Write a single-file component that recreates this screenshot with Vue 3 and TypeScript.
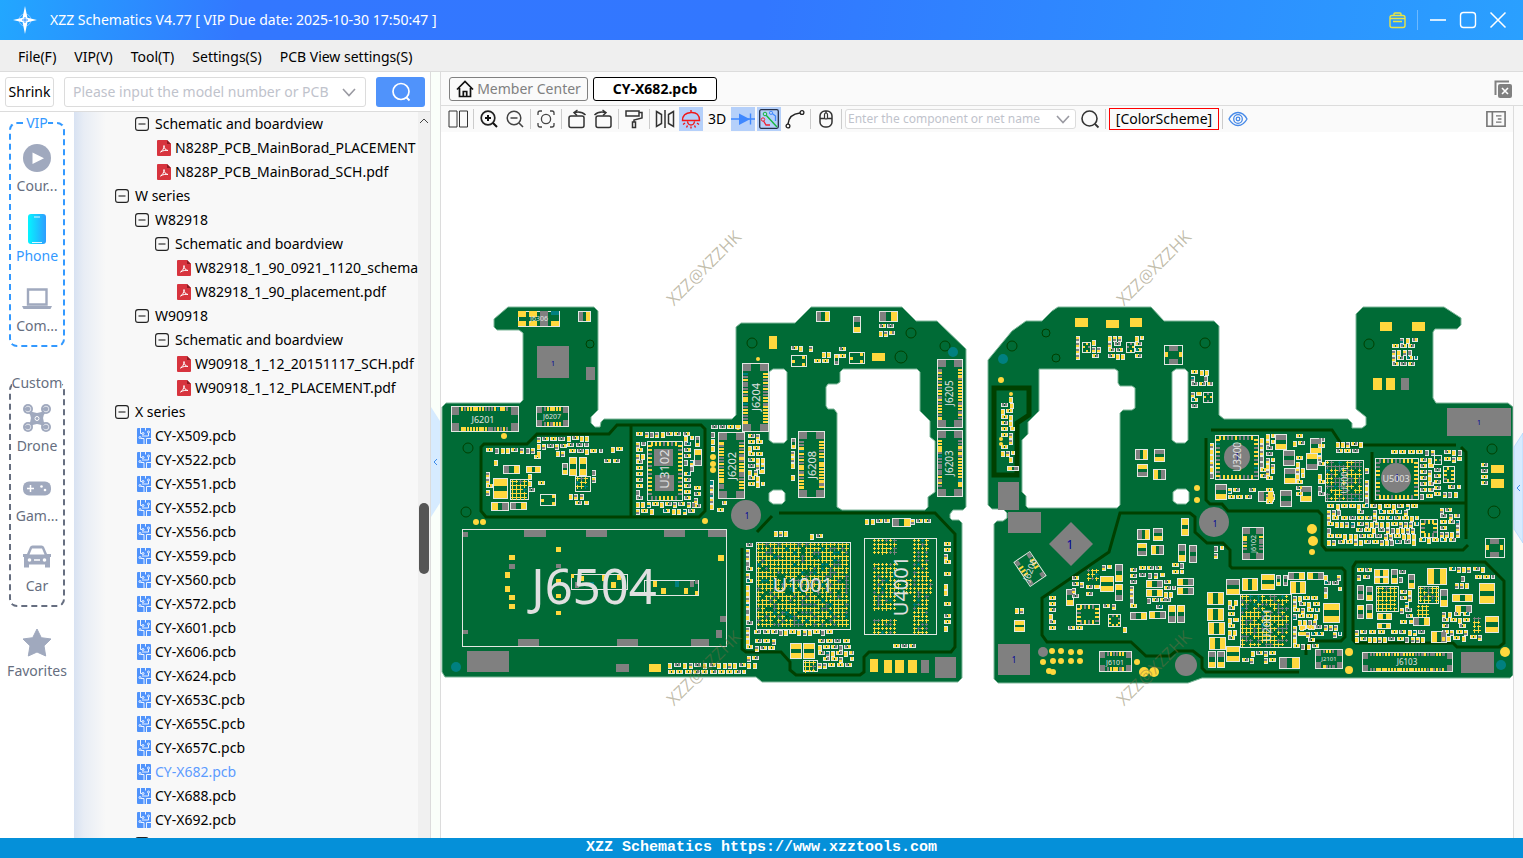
<script setup lang="ts">
type Ink = 'y' | 'g' | 't'
type Box = [number, number, number, number]

interface TreeRow {
  depth: number
  kind: 'group' | 'pdf' | 'pcb'
  name: string
  active?: boolean
}
interface Label {
  x: number
  y: number
  size: number
  text: string
  turn?: number
}

const menus = ['File(F)', 'VIP(V)', 'Tool(T)', 'Settings(S)', 'PCB View settings(S)']

const pcb = (n: string): TreeRow => ({ depth: 1, kind: 'pcb', name: `CY-X${n}.pcb`, active: n === '682' })
const rows: TreeRow[] = [
  { depth: 1, kind: 'group', name: 'Schematic and boardview' },
  { depth: 2, kind: 'pdf', name: 'N828P_PCB_MainBorad_PLACEMENT' },
  { depth: 2, kind: 'pdf', name: 'N828P_PCB_MainBorad_SCH.pdf' },
  { depth: 0, kind: 'group', name: 'W series' },
  { depth: 1, kind: 'group', name: 'W82918' },
  { depth: 2, kind: 'group', name: 'Schematic and boardview' },
  { depth: 3, kind: 'pdf', name: 'W82918_1_90_0921_1120_schema' },
  { depth: 3, kind: 'pdf', name: 'W82918_1_90_placement.pdf' },
  { depth: 1, kind: 'group', name: 'W90918' },
  { depth: 2, kind: 'group', name: 'Schematic and boardview' },
  { depth: 3, kind: 'pdf', name: 'W90918_1_12_20151117_SCH.pdf' },
  { depth: 3, kind: 'pdf', name: 'W90918_1_12_PLACEMENT.pdf' },
  { depth: 0, kind: 'group', name: 'X series' },
  ...['509', '522', '551', '552', '556', '559', '560', '572', '601', '606', '624', '653C', '655C', '657C', '682', '688', '692'].map(pcb),
]

/* Board drawing: every layer is one path that collects simple rectangles */
const ink: Record<Ink, string[]> = { y: [], g: [], t: [] }
const frames: string[] = []
const crosses: Record<Ink, string[]> = { y: [], g: [], t: [] }

let seed = 11
const rnd = () => {
  seed = (seed * 16807) % 2147483647
  return seed / 2147483647
}
const tint = (): Ink => {
  const r = rnd()
  return r < 0.64 ? 'y' : r < 0.97 ? 'g' : 't'
}
const fill = (c: Ink, x: number, y: number, w: number, h: number) => ink[c].push(`M${x} ${y}h${w}v${h}h${-w}z`)
const frame = (x: number, y: number, w: number, h: number) => frames.push(`M${x + 0.5} ${y + 0.5}h${w - 1}v${h - 1}h${1 - w}z`)

const chip = (x: number, y: number, w: number, h: number, a: Ink = 'y', b: Ink = 'y', tall = h > w) => {
  frame(x, y, w, h)
  if (tall) {
    const p = Math.max(2, Math.round(h * 0.31))
    fill(a, x + 1, y + 1, w - 2, p)
    fill(b, x + 1, y + h - 1 - p, w - 2, p)
  } else {
    const p = Math.max(2, Math.round(w * 0.31))
    fill(a, x + 1, y + 1, p, h - 2)
    fill(b, x + w - 1 - p, y + 1, p, h - 2)
  }
}

const tiny = (x: number, y: number, w: number, h: number) => {
  frame(x, y, w, h)
  if (h > w) {
    fill(tint(), x, y + 1, w - 1, 2)
    fill(tint(), x, y + h - 3, w - 1, 2)
  } else {
    fill(tint(), x + 1, y, 2, h - 1)
    fill(tint(), x + w - 3, y, 2, h - 1)
  }
}

const cluster = (x: number, y: number, w: number, h: number, density: number) => {
  const step = h > 20 ? 6 : 7
  for (let cy = y; cy + 4 <= y + h; cy += step) {
    let cx = x
    while (cx + 4 <= x + w) {
      const tall = w < 7 || (rnd() < 0.5 && cy + 6 <= y + h)
      const cw = tall ? 4 : Math.min(7, x + w - cx)
      if (rnd() < density) tiny(cx, cy, cw, tall ? 6 : 4)
      cx += cw + (rnd() < 0.25 ? 2 : 1)
    }
  }
}

const connector = (x: number, y: number, w: number, h: number) => {
  frame(x, y, w, h)
  const vertical = h > w
  const long = vertical ? h : w
  const short = vertical ? w : h
  const corner = Math.max(3, Math.round(short * 0.26))
  const depth = Math.max(3, Math.round(short * 0.17))
  const put = (c: Ink, along: number, across: number, l: number, d: number) =>
    vertical ? fill(c, x + across, y + along, d, l) : fill(c, x + along, y + across, l, d)
  for (const along of [1, long - 1 - corner]) {
    put('g', along, 1, corner, corner + 1)
    put('g', along, short - 2 - corner, corner, corner + 1)
  }
  for (let p = corner + 3; p < long - corner - 3; p += 3) {
    put(tint(), p, 1, rnd() < 0.2 ? 3 : 2, depth)
    put(tint(), p, short - 1 - depth, rnd() < 0.2 ? 3 : 2, depth)
  }
}

const quad = (x: number, y: number, w: number, h: number, pad: number) => {
  frame(x, y, w, h)
  for (let p = 4; p < w - 4; p += 4) {
    fill(tint(), x + p, y + 1, 2, pad)
    fill(tint(), x + p, y + h - 1 - pad, 2, pad)
  }
  for (let p = 4; p < h - 4; p += 4) {
    fill(tint(), x + 1, y + p, pad, 2)
    fill(tint(), x + w - 1 - pad, y + p, pad, 2)
  }
}

const bga = (x: number, y: number, w: number, h: number, keep: (i: number, j: number) => boolean = () => true, gray = 0.25, joined = 0.8) => {
  for (let j = 0; j * 4 + 3 < h; j++) {
    for (let i = 0; i * 4 + 3 < w; i++) {
      const r = rnd()
      if (!keep(i, j)) continue
      const c: Ink = r < gray ? 'g' : r < gray + 0.05 ? 't' : 'y'
      const l = rnd() < joined ? 4 : 3
      crosses[c].push(`M${x + i * 4 + 1} ${y + j * 4 + 2.5}h${l}M${x + i * 4 + 2.5} ${y + j * 4 + 1}v${l}`)
    }
  }
}

const pads: Array<[Ink, ...Box]> = [
  ['g', 537, 346, 32, 32], ['g', 586, 367, 9, 13], ['g', 467, 651, 42, 21], ['g', 616, 664, 13, 8],
  ['y', 649, 664, 12, 8], ['y', 870, 659, 8, 13], ['y', 884, 660, 8, 13], ['y', 895, 660, 9, 13],
  ['y', 908, 660, 9, 13], ['g', 921, 660, 8, 13], ['g', 935, 657, 21, 21], ['y', 769, 336, 8, 13],
  ['y', 872, 353, 13, 8], ['y', 1075, 318, 13, 9], ['y', 1106, 320, 13, 8], ['y', 1130, 318, 12, 9],
  ['g', 998, 482, 21, 28], ['g', 1008, 512, 33, 21], ['y', 1380, 322, 12, 9], ['y', 1412, 322, 13, 9],
  ['y', 1373, 378, 9, 12], ['y', 1386, 378, 9, 12], ['g', 1401, 378, 8, 12], ['g', 1447, 408, 64, 28],
  ['y', 1491, 465, 13, 8], ['y', 1491, 479, 13, 9], ['g', 998, 644, 32, 31], ['g', 1461, 652, 33, 21],
  ['g', 524, 530, 22, 7], ['g', 586, 530, 21, 7], ['g', 664, 530, 21, 7], ['g', 708, 530, 18, 7],
  ['g', 518, 639, 21, 7], ['g', 617, 639, 21, 7], ['g', 691, 639, 18, 7], ['g', 463, 532, 5, 5],
  ['g', 463, 630, 5, 4], ['y', 718, 555, 6, 6], ['g', 720, 616, 6, 6], ['g', 716, 630, 6, 8],
  ['y', 509, 555, 6, 5], ['g', 509, 564, 6, 5], ['y', 505, 572, 5, 6], ['y', 505, 586, 5, 6],
  ['y', 509, 595, 6, 5], ['y', 509, 604, 6, 5], ['y', 556, 547, 5, 5], ['g', 556, 564, 5, 4],
  ['y', 556, 579, 5, 4], ['y', 556, 594, 5, 4], ['y', 556, 611, 5, 4], ['y', 571, 574, 3, 4],
  ['g', 575, 582, 4, 6], ['y', 580, 576, 4, 5], ['t', 590, 582, 4, 4], ['y', 602, 575, 5, 6],
  ['y', 611, 582, 5, 6], ['y', 617, 575, 4, 5], ['y', 622, 584, 3, 5], ['y', 653, 581, 4, 6],
  ['y', 661, 588, 5, 6], ['t', 675, 581, 4, 6], ['g', 690, 581, 4, 6], ['y', 684, 588, 4, 6],
  ['y', 695, 591, 3, 4], ['g', 695, 580, 3, 4], ['g', 654, 449, 19, 17], ['g', 655, 475, 19, 16],
  ['y', 518, 311, 8, 6], ['y', 529, 311, 8, 6], ['g', 540, 311, 8, 15], ['t', 551, 311, 8, 4],
  ['y', 518, 321, 8, 5], ['y', 529, 321, 8, 5], ['y', 551, 321, 8, 5],
]
pads.forEach((p) => fill(...p))
for (const f of [[518, 311, 42, 16], [462, 529, 265, 118], [571, 574, 57, 16], [644, 580, 55, 16], [756, 542, 95, 88], [864, 538, 73, 97], [540, 494, 16, 12], [791, 355, 16, 12], [849, 352, 16, 12], [1164, 345, 19, 20], [1485, 538, 20, 20]] as Box[]) frame(...f)
for (const [x, y] of [[1164, 345], [1485, 538]]) {
  fill('g', x + 5, y + 1, 9, 5)
  fill('g', x + 5, y + 14, 9, 5)
  fill('y', x + 1, y + 7, 3, 5)
  fill('y', x + 15, y + 7, 3, 5)
}
for (const [x, y] of [[541, 499], [552, 495], [552, 502], [792, 360], [802, 356], [802, 363], [850, 357], [860, 353], [860, 360]]) fill('y', x, y, 3, 3)

for (const c of [[451, 406, 68, 26], [536, 406, 33, 21], [742, 363, 27, 69], [718, 432, 27, 67], [798, 431, 27, 67], [937, 359, 26, 69], [937, 430, 26, 67], [1099, 651, 33, 21], [1242, 527, 22, 33], [1362, 652, 91, 20], [1315, 649, 28, 20]] as Box[]) connector(...c)
for (const q of [[1215, 435, 44, 45, 4], [1375, 458, 44, 42, 4], [647, 441, 36, 60, 4], [1076, 604, 24, 21, 4], [1108, 614, 13, 13, 2], [1420, 519, 18, 19, 4], [1082, 342, 9, 11, 2], [1126, 342, 9, 11, 2], [1203, 392, 10, 11, 2], [1443, 466, 12, 17, 3], [1434, 455, 8, 10, 2]] as Array<[number, number, number, number, number]>) quad(...q)

bga(756, 542, 94, 87, (i, j) => rnd() < (i > 4 && i < 17 && j > 7 && j < 15 ? 0.78 : 0.95), 0.2)
bga(864, 538, 73, 97, (i, j) => (i > 1 && i < 8 && (j < 4 || (j > 5 && j < 10) || (j > 13 && j < 18) || j > 19)) || (i > 11 && i < 16) || (i > 0 && i < 17 && j > 9 && j < 14 && i % 8 !== 1), 0.2, 0.3)
bga(1325, 460, 39, 42, () => rnd() < 0.94, 0.5)
bga(1240, 594, 51, 54, () => rnd() < 0.9, 0.3)
bga(510, 479, 18, 21, () => true, 0.15)
bga(575, 476, 15, 15, () => true, 0.2)
bga(1376, 586, 23, 26, () => true, 0.1)
bga(1418, 586, 21, 17, () => true, 0.15)
bga(1472, 616, 11, 18, () => true, 0.1)
bga(1086, 568, 12, 14, () => true, 0.2)
bga(803, 660, 15, 12, () => true, 0.1)
bga(1416, 604, 13, 12, () => true, 0.1)
for (const f of [[510, 479, 19, 21], [575, 476, 16, 16], [1325, 460, 39, 42], [1240, 594, 52, 54], [1376, 586, 23, 26], [1418, 586, 21, 18], [803, 660, 15, 12]] as Box[]) frame(...f)

const parts: Array<[number, number, number, number, Ink, Ink, boolean?]> = [
  [578, 311, 13, 11, 'g', 'y'], [493, 478, 15, 21, 'y', 'y'], [503, 465, 17, 9, 'g', 'y'], [526, 466, 15, 7, 'y', 'y'],
  [491, 502, 18, 9, 'y', 'g'], [510, 502, 17, 8, 'g', 'y'], [569, 457, 8, 19, 'y', 'y'], [579, 457, 8, 19, 'y', 'y'],
  [562, 463, 6, 12, 'g', 'y'], [694, 449, 8, 17, 'y', 'g'], [695, 436, 5, 11, 'g', 'y'], [816, 311, 14, 11, 'g', 'y'],
  [853, 316, 8, 17, 'g', 'y'], [879, 311, 19, 11, 'g', 'y'], [892, 518, 19, 9, 'g', 'y'], [790, 643, 12, 16, 'y', 'y'],
  [803, 643, 12, 16, 'y', 'y'], [834, 354, 5, 11, 'y', 'g'], [1135, 449, 13, 11, 'g', 'y'], [1154, 449, 11, 13, 'g', 'y'],
  [1137, 464, 11, 13, 'y', 'g'], [1153, 469, 13, 11, 'y', 'g', false], [1137, 529, 13, 11, 'g', 'y'], [1153, 528, 10, 13, 'g', 'y'],
  [1137, 543, 10, 13, 'y', 'g'], [1151, 545, 13, 10, 'y', 'g'], [1181, 518, 8, 18, 'y', 'y'], [1178, 544, 8, 18, 'g', 'y'],
  [1189, 545, 8, 18, 'g', 'g'], [1100, 576, 14, 16, 'y', 'y'], [1115, 564, 8, 18, 'g', 'y'], [1115, 584, 8, 17, 'y', 'g'],
  [1066, 589, 8, 17, 'g', 'y'], [1146, 580, 17, 8, 'y', 'g'], [1146, 589, 17, 8, 'y', 'y'], [1177, 578, 17, 8, 'y', 'g'],
  [1177, 587, 17, 8, 'y', 'g'], [1130, 612, 17, 8, 'g', 'y'], [1149, 611, 17, 8, 'y', 'g'], [1168, 605, 8, 18, 'y', 'g'],
  [1177, 605, 8, 18, 'y', 'g'], [1207, 592, 17, 13, 'y', 'y'], [1207, 608, 17, 13, 'y', 'y'], [1208, 622, 17, 13, 'y', 'y'],
  [1209, 637, 17, 13, 'y', 'y'], [1208, 651, 8, 17, 'g', 'y'], [1217, 651, 8, 17, 'g', 'y'], [1226, 646, 14, 16, 'y', 'y'],
  [1226, 579, 14, 16, 'g', 'y'], [1242, 578, 16, 13, 'y', 'y'], [1261, 574, 14, 16, 'y', 'y'], [1288, 572, 17, 8, 'g', 'y'],
  [1307, 572, 17, 8, 'y', 'g'], [1290, 581, 16, 13, 'y', 'y'], [1279, 657, 21, 12, 'g', 'y'], [1323, 603, 17, 20, 'y', 'y'],
  [1276, 575, 5, 11, 'g', 'y'], [1283, 575, 5, 11, 'g', 'g'], [1374, 569, 15, 8, 'y', 'y'], [1374, 577, 15, 7, 'y', 'y'],
  [1391, 569, 7, 15, 'g', 'y'], [1427, 568, 20, 17, 'y', 'y'], [1479, 583, 16, 21, 'y', 'y'], [1452, 594, 21, 8, 'y', 'y'],
  [1455, 605, 17, 8, 'y', 'g'], [1377, 613, 15, 7, 'y', 'y'], [1377, 623, 14, 6, 'y', 'y'], [1485, 616, 14, 17, 'y', 'y'],
  [1431, 631, 16, 12, 'y', 'g'], [1357, 585, 7, 15, 'g', 'g'], [1366, 586, 7, 15, 'g', 'y'], [1357, 605, 7, 14, 'y', 'g'],
  [1366, 604, 7, 15, 'g', 'y'], [1440, 589, 8, 18, 'g', 'y'], [1413, 617, 17, 9, 'g', 'y'], [1408, 574, 7, 15, 'g', 'y'],
  [1014, 620, 11, 12, 'y', 'y'], [1007, 466, 12, 5, 'y', 'g'], [1275, 434, 12, 16, 'g', 'y'], [1310, 438, 12, 16, 'g', 'y'],
  [1306, 453, 12, 17, 'y', 'g'], [1283, 450, 12, 16, 'g', 'g'], [1284, 468, 12, 16, 'g', 'y'], [1300, 486, 12, 16, 'g', 'y'],
  [1280, 490, 12, 17, 'g', 'g'], [1258, 491, 16, 11, 'g', 'y'], [1215, 484, 12, 16, 'g', 'y'], [791, 438, 5, 11, 'g', 'y'],
]
parts.forEach((p) => chip(...p))

const clusters: Array<[number, number, number, number, number]> = [
  [486, 448, 51, 7, 1], [537, 437, 30, 20, 0.9], [567, 436, 22, 12, 0.9], [569, 449, 34, 6, 1], [602, 447, 22, 8, 0.6],
  [486, 460, 8, 52, 0.6], [494, 460, 8, 7, 0.8], [528, 474, 20, 19, 0.5], [534, 455, 20, 10, 0.4], [569, 494, 20, 15, 0.9],
  [592, 470, 6, 13, 0.8], [594, 459, 30, 7, 0.6], [615, 485, 8, 14, 0.8], [636, 432, 58, 8, 0.97], [636, 442, 10, 60, 0.9],
  [684, 436, 10, 66, 0.92], [636, 502, 60, 14, 0.95], [694, 480, 8, 28, 0.8], [711, 425, 30, 5, 1], [711, 432, 6, 20, 1],
  [710, 480, 7, 30, 0.97], [717, 501, 10, 12, 0.8], [748, 434, 17, 56, 1], [791, 451, 6, 30, 0.8], [791, 346, 24, 8, 0.8],
  [814, 352, 20, 12, 0.7], [839, 347, 10, 16, 0.8], [879, 324, 16, 16, 0.9], [860, 519, 30, 8, 0.85], [911, 519, 20, 7, 0.9],
  [746, 543, 8, 110, 1], [774, 531, 18, 7, 1], [810, 534, 14, 7, 1], [754, 630, 80, 7, 0.85], [755, 639, 24, 14, 0.9],
  [818, 639, 36, 33, 0.8], [747, 656, 14, 14, 0.9], [668, 663, 78, 11, 1], [944, 542, 7, 96, 0.65], [893, 644, 26, 5, 0.7],
  [1076, 336, 6, 24, 0.95], [1092, 340, 9, 18, 0.8], [1108, 336, 17, 24, 0.97], [1135, 336, 9, 22, 0.9], [1191, 364, 22, 26, 0.75],
  [1191, 392, 11, 22, 0.8], [1001, 397, 14, 68, 0.85], [1210, 437, 5, 42, 0.9], [1260, 438, 8, 42, 0.95], [1228, 488, 28, 13, 0.85],
  [1266, 434, 9, 70, 0.85], [1288, 434, 18, 16, 0.95], [1296, 456, 9, 44, 0.95], [1318, 438, 8, 60, 0.95], [1328, 442, 36, 16, 0.75],
  [1365, 462, 6, 42, 0.8], [1391, 450, 44, 6, 1], [1420, 458, 14, 42, 0.95], [1434, 468, 9, 30, 0.85], [1444, 450, 18, 15, 0.85],
  [1443, 485, 18, 14, 0.9], [1327, 504, 92, 42, 0.92], [1440, 508, 20, 36, 0.85], [1419, 538, 20, 7, 0.8], [1392, 338, 26, 28, 0.85],
  [1481, 463, 7, 26, 0.9], [1357, 568, 16, 16, 0.95], [1399, 570, 8, 16, 0.85], [1449, 567, 38, 7, 1], [1400, 590, 14, 34, 0.85],
  [1355, 630, 74, 14, 0.97], [1442, 612, 28, 32, 0.85], [1475, 575, 20, 7, 0.7], [1470, 635, 26, 8, 0.8], [1450, 576, 24, 16, 0.5],
  [1293, 596, 27, 56, 0.92], [1324, 575, 18, 26, 0.95], [1300, 625, 42, 14, 0.8], [1242, 651, 36, 16, 0.9], [1228, 600, 11, 44, 0.9],
  [1130, 568, 8, 40, 1], [1139, 566, 26, 13, 0.85], [1147, 598, 20, 12, 0.9], [1164, 580, 12, 22, 0.9], [1172, 563, 12, 12, 0.9],
  [1049, 596, 8, 34, 0.75], [1072, 576, 12, 24, 0.7], [1086, 585, 14, 16, 0.6], [1068, 626, 16, 6, 0.8], [1102, 565, 10, 10, 0.8],
  [1015, 608, 9, 7, 1], [1214, 546, 10, 16, 0.8], [1103, 604, 14, 6, 0.6], [1118, 627, 10, 6, 0.7],
]
clusters.forEach((c) => cluster(...c))

const shapes = [
  'M442 407l4-4h74l3-3v-67l-4-3h-22l-3-3v-8l14-12h86l4 4v99l-7 7v6l4 4h5l1-5 3-3h128l4-4v-88l5-4h54l16-16h91l14 14h21l29 28v158l-3 3h-10l-3 4v4l2 2h7l3 3v155l-4 4H762l-6-5H445l-3-5z M773 369h11l3 3v68l-3 3h-11l-4-3v-68z M773 490h9l3 3v8l-3 3h-9l-4-3v-8z M843 369h74l3 3v39l10 10v16l5 4v51l-7 5v10l-3 3h-83l-5-3v-94l-3-4h-6l-2-3v-19l2-3h9l3-2v-10z',
  'M988 360l24-29 14-10h16l10-10 6-4h93l13 14h50l5 5v89l5 4h124l4 4v5h10l4-3v-8l-10-8v-95l7-7h81l17 11v7l-4 4h-22l-2 3v66l3 5h72l5 4v268l-3 3h-308l-14 5H998l-4-4V524l3-3h6l4-3v-5l-4-4h-11l-4-4z M1176 369h9l3 3v68l-3 3h-9l-4-3v-68z M1177 489h9l3 3v9l-3 3h-9l-4-3v-9z M1039 369h76l3 2v12l2 3h12l3 2v20l-3 2h-9l-3 3v92l-3 3h-89l-2-2v-10l-4-4v-52l6-6v-12l11-11z',
]
const traces = [
  'M484 444h43l10-10h72l8-9h84l4 4v82l-6 6H486l-5-6v-64z M631 425v92',
  'M779 513h156l20 21v113l-4 5h-82l-5 5v15l-4 3h-64l-6-5v-8l-9-10h-35l-4-3V548 M757 532l15-16',
  'M1211 430h121l10 15h114 M1461 447l5 5v87 M1206 438v62l4 4h12l6 7h90l4 4v30l4 5h137l5-5 M1372 452v51h94',
  'M1306 655v-8l6-6h29l4-4v-66l-3-3h-110l-2-2v-16l-7-7h-16l-12-11v-15l-5-4h-70l-11 39-67 46v37l5 7h84l15 14h24l6-5h17l9 7v10l4 4h93',
  'M1356 562h129l19 19v62l-5 4h-42l-4-4h-97l-3-3v-73z',
]
const holes = [[590, 344, 5], [468, 448, 6], [466, 512, 6], [752, 343, 6], [911, 333, 6], [901, 357, 7], [945, 346, 6], [1012, 346, 6], [1046, 333, 5], [1056, 358, 5], [1205, 343, 6], [1369, 344, 6], [1492, 449, 6], [1494, 512, 7]]
const vias = [[504, 436, 3], [476, 522, 3], [483, 522, 3], [705, 521, 3], [713, 457, 3], [713, 464, 3], [713, 470, 3], [738, 428, 2], [758, 359, 2], [1001, 380, 3], [1011, 394, 2], [1001, 439, 2], [1001, 444, 2], [1197, 488, 3], [1197, 500, 3], [1312, 529, 5], [1313, 541, 5], [1312, 552, 3], [1052, 651, 3], [1061, 651, 3], [1071, 652, 3], [1080, 652, 3], [1043, 662, 3], [1053, 661, 3], [1061, 661, 3], [1071, 661, 3], [1080, 661, 3], [1049, 671, 3], [1053, 672, 3], [1137, 662, 3], [1144, 672, 5], [1154, 672, 5], [1349, 652, 4], [1349, 670, 4], [1505, 652, 5]]
const tealVias = [[456, 667, 5], [953, 352, 5], [1003, 359, 5], [1501, 665, 5]]
const discs = [[746, 515, 15], [1214, 522, 15], [1186, 665, 11], [1043, 652, 5], [1237, 457, 13], [1396, 478, 15]]

const labels: Label[] = [
  { x: 594, y: 604, size: 49, text: 'J6504' },
  { x: 803, y: 592, size: 20, text: 'U1001' },
  { x: 908, y: 586, size: 20, text: 'U4001', turn: -90 },
  { x: 483, y: 423, size: 9, text: 'J6201' },
  { x: 552, y: 419, size: 7, text: 'J6207' },
  { x: 539, y: 321, size: 7, text: 'J6306' },
  { x: 760, y: 397, size: 11, text: 'J6204', turn: -90 },
  { x: 736, y: 466, size: 11, text: 'J6202', turn: -90 },
  { x: 816, y: 465, size: 11, text: 'J6208', turn: -90 },
  { x: 953, y: 393, size: 10, text: 'J6205', turn: -90 },
  { x: 953, y: 463, size: 10, text: 'J6203', turn: -90 },
  { x: 669, y: 469, size: 13, text: 'U3102', turn: -90 },
  { x: 1241, y: 457, size: 10, text: 'U3200', turn: -90 },
  { x: 1348, y: 480, size: 9, text: 'U3001', turn: -90 },
  { x: 1271, y: 625, size: 11, text: 'U2001', turn: -90 },
  { x: 1396, y: 482, size: 9, text: 'U5003' },
  { x: 1115, y: 665, size: 7, text: 'J6101' },
  { x: 1256, y: 544, size: 7, text: 'J6102', turn: -90 },
  { x: 1407, y: 665, size: 8, text: 'J6103' },
  { x: 1329, y: 661, size: 6, text: 'J2101' },
  { x: 1033, y: 571, size: 9, text: 'J6206', turn: -70 },
]
const ones = [[553, 366, 7], [747, 519, 8], [1070, 549, 12], [1215, 527, 8], [1014, 663, 8], [1479, 425, 7], [1237, 460, 8], [1397, 481, 8]]
const marks = [[704, 268], [1154, 268], [704, 668], [1154, 668]]
</script>

<template>
  <div class="app">
    <header class="title-bar">
      <svg class="logo" viewBox="0 0 28 30" aria-hidden="true">
        <circle cx="14" cy="15" r="6" fill="none" stroke="#8fc4ff" stroke-width="1" />
        <path d="M14 1l2.400 11.600L14 15l-2.400-2.400zM14 29l2.400-11.600L14 15l-2.400 2.400zM2 15l9.600-2.200L14 15l-2.400 2.200zM26 15l-9.600-2.200L14 15l2.400 2.200z" fill="#fff" />
        <path d="M14 12v6M11 15h6" stroke="#3390ff" stroke-width="1" />
      </svg>
      <h1>XZZ Schematics V4.77 [ VIP Due date: 2025-10-30 17:50:47 ]</h1>
      <div class="window-tools">
        <button type="button" class="bag" aria-label="Shop">
          <svg viewBox="0 0 20 20"><g fill="none" stroke="#e9e544" stroke-width="1.400"><rect x="3" y="5.500" width="15" height="12" rx="2" /><path d="M7 5.500v-1.500q0-1 1-1h5q1 0 1 1v1.500M6 11.500h9M3 8.500h15" /></g></svg>
        </button>
        <button type="button" aria-label="Minimize"><svg viewBox="0 0 20 20"><path d="M2 10h16" stroke="#fff" stroke-width="1.600" /></svg></button>
        <button type="button" aria-label="Maximize"><svg viewBox="0 0 20 20"><rect x="2.500" y="2.500" width="15" height="15" rx="3" fill="none" stroke="#fff" stroke-width="1.400" /></svg></button>
        <button type="button" aria-label="Close"><svg viewBox="0 0 20 20"><path d="M2.500 2.500l15 15M17.500 2.500l-15 15" stroke="#fff" stroke-width="1.500" /></svg></button>
      </div>
    </header>

    <nav class="menu-bar">
      <button v-for="m in menus" :key="m" type="button">{{ m }}</button>
    </nav>

    <div class="work">
      <aside class="browser">
        <form class="finder" @submit.prevent>
          <button type="button" class="shrink">Shrink</button>
          <div class="combo">
            <input type="text" aria-label="Model number" placeholder="Please input the model number or PCB" />
            <svg viewBox="0 0 14 9" aria-hidden="true"><path d="M1 1l6 6.500L13 1" fill="none" stroke="#9a9aa2" stroke-width="1.600" /></svg>
          </div>
          <button type="submit" class="go" aria-label="Search">
            <svg viewBox="0 0 20 20"><circle cx="10" cy="9.500" r="8" fill="none" stroke="#fff" stroke-width="1.700" /><path d="M15.500 15.500l3 3" stroke="#fff" stroke-width="1.800" /></svg>
          </button>
        </form>

        <div class="panes">
          <nav class="categories">
            <fieldset class="vip">
              <legend>VIP</legend>
              <button type="button">
                <svg viewBox="0 0 28 28"><circle cx="14" cy="14" r="14" fill="#a0a9be" /><path d="M9.500 8.500v11.500L21 14.200z" fill="#fff" /></svg>Cour...
              </button>
              <button type="button" class="on">
                <svg viewBox="0 0 28 28"><defs><linearGradient id="glow"><stop offset="0" stop-color="#05f4ff" /><stop offset="1" stop-color="#2e9dff" /></linearGradient></defs><rect x="5" y="0" width="18" height="30" rx="3" fill="url(#glow)" /><path d="M11 3h6M9 28.500h10" stroke="#dff6ff" stroke-width="1" /></svg>Phone
              </button>
              <button type="button">
                <svg viewBox="0 0 28 28"><path d="M5 5.500h18.500v15H5z" fill="none" stroke="#a0a9be" stroke-width="2.400" /><path d="M-1 22h30l-1.500 3h-27z" fill="#a0a9be" /></svg>Com...
              </button>
            </fieldset>
            <fieldset class="custom">
              <legend>Custom</legend>
              <button type="button">
                <svg viewBox="0 0 28 28"><path d="M6 6q8 6 16 0l1 2q-6 6 0 13l-2 2q-7-6-14 0l-2-2q6-7 0-13z" fill="#a0a9be" /><g fill="#a0a9be"><circle cx="5" cy="5" r="5" /><circle cx="23" cy="5" r="5" /><circle cx="5" cy="23" r="5" /><circle cx="23" cy="23" r="5" /></g><g fill="none" stroke="#fff"><circle cx="5" cy="5" r="2.800" stroke-dasharray="7 3" stroke-opacity=".7" /><circle cx="23" cy="5" r="2.800" stroke-dasharray="7 3" stroke-opacity=".7" /><circle cx="5" cy="23" r="2.800" stroke-dasharray="7 3" stroke-opacity=".7" /><circle cx="23" cy="23" r="2.800" stroke-dasharray="7 3" stroke-opacity=".7" /><circle cx="14" cy="14.500" r="2" /></g></svg>Drone
              </button>
              <button type="button">
                <svg viewBox="0 0 28 28"><rect y="7.500" width="28" height="14" rx="6" fill="#a0a9be" /><path d="M7.500 11v7M4 14.500h7" stroke="#fff" stroke-width="1.500" /><circle cx="18.500" cy="12.500" r="1.300" fill="#fff" /><circle cx="22" cy="16" r="1.300" fill="#fff" /></svg>Gam...
              </button>
              <button type="button">
                <svg viewBox="0 0 28 28"><path d="M4 10l3-7q.6-1.500 2.500-1.500h9q1.900 0 2.500 1.500l3 7h4v3h-1v10.500h-5v-3H6v3H1V13H0v-3z" fill="#a0a9be" /><path d="M6.500 10.500l2.500-6h10l2.500 6z" fill="#fff" /><circle cx="6.500" cy="16" r="1.800" fill="#fff" /><circle cx="21.500" cy="16" r="1.800" fill="#fff" /><path d="M11 16h6" stroke="#fff" stroke-width="1.500" /></svg>Car
              </button>
            </fieldset>
            <button type="button" class="favorites">
              <svg viewBox="0 0 28 28"><path d="M14 0l4.300 8.700 9.700 1.300-7 6.800 1.700 10.200L14 23l-8.700 4L7 16.800 0 10l9.700-1.300z" fill="#a0a9be" stroke="#a0a9be" stroke-linejoin="round" /></svg>Favorites
            </button>
          </nav>

          <div class="tree">
            <ul>
              <li v-for="(r, i) in rows" :key="i" :class="[r.kind, 'd' + r.depth, { on: r.active }]">
                <svg v-if="r.kind === 'group'" viewBox="0 0 14 14"><rect x=".6" y=".6" width="12.800" height="12.800" rx="2.500" fill="none" stroke="#222" stroke-width="1.100" /><path d="M3.500 7h7" stroke="#222" stroke-width="1.100" /></svg>
                <svg v-else-if="r.kind === 'pdf'" viewBox="0 0 14 16"><path d="M1 0h9l4 4v11q0 1-1 1H1q-1 0-1-1V1q0-1 1-1z" fill="#d7343e" /><path d="M10 0v4h4z" fill="#8e1a22" /><path d="M3.500 12c2.500-1.500 3.500-4 3.500-6.500 0 3 1.500 4.500 4 5-2.500-.500-5 0-7.500 1.500z" fill="none" stroke="#fff" /></svg>
                <svg v-else viewBox="0 0 14 16"><rect width="14" height="16" rx="1" fill="#5093fb" /><g fill="none" stroke="#fff" stroke-width=".9"><path d="M3.500 0v5.500h1.500M8.500 0v2.500M5 8h6.500V5M4 10.500h3v5.500M9.500 16v-5.500h4.500" /><circle cx="6" cy="5.500" r="1" /><circle cx="11.500" cy="4" r="1" /><circle cx="3" cy="9.500" r="1" /></g></svg>
                <span>{{ r.name }}</span>
              </li>
              <li class="group d1"><svg viewBox="0 0 14 14"><rect x=".6" y=".6" width="12.800" height="12.800" rx="2.500" fill="none" stroke="#222" stroke-width="1.100" /></svg></li>
            </ul>
            <div class="scroll">
              <svg viewBox="0 0 12 18"><path d="M2 11l4-4 4 4" fill="none" stroke="#444" /></svg>
              <i class="gap-top"></i><i class="thumb"></i><i class="gap-end"></i>
            </div>
          </div>
        </div>
      </aside>

      <div class="splitter">
        <button type="button" aria-label="Collapse file list">
          <svg viewBox="0 0 9 110"><path d="M0 0l9 14v82l-9 14z" fill="#d6ebff" /><path d="M6 52l-3 3 3 3" fill="none" stroke="#3d8bea" /></svg>
        </button>
      </div>

      <main>
        <div class="tabs">
          <button type="button" class="tab home">
            <svg viewBox="0 0 18 18"><path d="M1 9.500L9 1.500l8 8M3.500 8v8.500h11V8M7.300 16.500v-5h3.400v5" fill="none" stroke="#111" stroke-width="1.700" /></svg>Member Center
          </button>
          <button type="button" class="tab current">CY-X682.pcb</button>
          <button type="button" class="close-all" aria-label="Close all tabs">
            <svg viewBox="0 0 18 18"><path d="M1.500 15V1.500H15" fill="none" stroke="#808080" stroke-width="2" /><rect x="4" y="4" width="14" height="14" rx="2" fill="#808080" /><path d="M8 8l6 6M14 8l-6 6" stroke="#fff" stroke-width="1.600" /></svg>
          </button>
        </div>

        <div class="view">
          <div class="tools">
            <button type="button" aria-label="Split view"><svg viewBox="0 0 20 20"><path d="M1 2h8v16H1zM11.500 2h8v16h-8z" fill="none" stroke="#333" /></svg></button>
            <i></i>
            <button type="button" aria-label="Zoom in"><svg viewBox="0 0 20 20"><circle cx="9" cy="9" r="6.800" fill="none" stroke="#222" stroke-width="1.700" /><path d="M9 6v6M6 9h6M14 14l4 4" stroke="#111" stroke-width="2" /></svg></button>
            <button type="button" aria-label="Zoom out"><svg viewBox="0 0 20 20"><circle cx="9" cy="9" r="6.800" fill="none" stroke="#444" stroke-width="1.500" /><path d="M5.500 9h7M14 14l4 4" stroke="#444" stroke-width="1.600" /></svg></button>
            <i></i>
            <button type="button" aria-label="Fit to window"><svg viewBox="0 0 20 20"><path d="M2 6V4q0-2 2-2h2M14 2h2q2 0 2 2v2M18 14v2q0 2-2 2h-2M6 18H4q-2 0-2-2v-2" fill="none" stroke="#444" stroke-width="1.300" /><circle cx="10" cy="10" r="4.600" fill="none" stroke="#444" stroke-width="1.300" /></svg></button>
            <i></i>
            <button type="button" aria-label="Rotate left"><svg viewBox="0 0 20 20"><rect x="2" y="7" width="15" height="11.500" rx="2" fill="none" stroke="#333" stroke-width="1.500" /><path d="M18.500 6q-4-4-11-2.500M10.500 1L7 3.500l3 3" fill="none" stroke="#333" stroke-width="1.500" /></svg></button>
            <button type="button" aria-label="Rotate right"><svg viewBox="0 0 20 20"><rect x="3" y="7" width="15" height="11.500" rx="2" fill="none" stroke="#333" stroke-width="1.500" /><path d="M1.500 6q4-4 11-2.500M9.500 1L13 3.500l-3 3" fill="none" stroke="#333" stroke-width="1.500" /></svg></button>
            <i></i>
            <button type="button" aria-label="Color roller"><svg viewBox="0 0 20 20"><path d="M2 2h13v5H2zM15 3.500h3v5.500l-8 2v2M8.500 13h3v5.500h-3z" fill="none" stroke="#333" stroke-width="1.500" /></svg></button>
            <i></i>
            <button type="button" aria-label="Mirror"><svg viewBox="0 0 20 20"><path d="M1.500 2.500l5 3v9l-5 3zM18.500 2.500l-5 3v9l5 3zM10 1v18" fill="none" stroke="#333" stroke-width="1.500" /></svg></button>
            <button type="button" class="lit" aria-label="Highlight"><svg viewBox="0 0 20 20"><path d="M1.500 11.500q0-7.500 8.500-8t8.500 8zM10 3.500V1M6.500 12.500q.5 3.500 3.500 3.500t3.500-3.500M4 14l-2 1.500M16 14l2 1.500M10 17.500v2M6.500 16.500L5.500 18.500M13.500 16.500l1 2" fill="none" stroke="#f11818" stroke-width="1.400" /></svg></button>
            <button type="button" class="three">3D</button>
            <button type="button" class="lit" aria-label="Diode values"><svg viewBox="0 0 20 20"><path d="M-2 10h24M17.500 4.500v11" stroke="#3f88ff" stroke-width="1.400" /><path d="M6 4.500v11.500l11-5.700z" fill="#3f88ff" /></svg></button>
            <button type="button" class="lit" aria-label="Net lines"><svg viewBox="0 0 20 20"><rect x=".7" y=".7" width="18.600" height="18.600" rx="1.500" fill="none" stroke="#25314a" stroke-width="1.300" /><path d="M6 5l12 13" stroke="#16b83c" stroke-width="1.400" /><circle cx="6" cy="5" r="1.800" fill="#b9d2f8" stroke="#16b83c" /><path d="M12.500 4l4 3v5" fill="none" stroke="#3f88ff" stroke-width="1.300" /><circle cx="12" cy="3.800" r="1.600" fill="#b9d2f8" stroke="#3f88ff" /><path d="M4 11l3 5h4" fill="none" stroke="#f02030" stroke-width="1.300" /><circle cx="4" cy="10.500" r="1.700" fill="#b9d2f8" stroke="#f02030" /></svg></button>
            <button type="button" aria-label="Measure"><svg viewBox="0 0 20 20"><path d="M3 15Q4 5 15 4" fill="none" stroke="#222" stroke-width="1.500" /><circle cx="3" cy="17" r="1.900" fill="none" stroke="#222" stroke-width="1.300" /><circle cx="17" cy="3.500" r="1.900" fill="none" stroke="#222" stroke-width="1.300" /></svg></button>
            <i></i>
            <button type="button" aria-label="Mouse settings"><svg viewBox="0 0 20 20"><rect x="4" y="2" width="12" height="16" rx="5" fill="none" stroke="#333" stroke-width="1.500" /><path d="M4 9.500h12M10 2v2" stroke="#333" stroke-width="1.400" /><rect x="8.500" y="4" width="3" height="6" rx="1.500" fill="#fafafa" stroke="#333" stroke-width="1.200" /></svg></button>
            <i></i>
            <div class="combo net">
              <input type="text" aria-label="Component or net name" placeholder="Enter the component or net name" />
              <svg viewBox="0 0 14 9" aria-hidden="true"><path d="M1 1l6 6.500L13 1" fill="none" stroke="#9a9aa2" stroke-width="1.600" /></svg>
            </div>
            <button type="button" aria-label="Find"><svg viewBox="0 0 20 20"><circle cx="9.500" cy="9.500" r="7.500" fill="none" stroke="#333" stroke-width="1.600" /><path d="M15 15l3.500 3.500" stroke="#333" stroke-width="1.800" /></svg></button>
            <i></i>
            <button type="button" class="scheme">[ColorScheme]</button>
            <i></i>
            <button type="button" aria-label="Visibility"><svg viewBox="0 0 20 20"><g fill="none" stroke="#4689e8" stroke-width="1.300"><path d="M1 10q3.500-6.500 9-6.500t9 6.500q-3.500 6.500-9 6.500T1 10z" /><circle cx="10" cy="10" r="4.300" /><circle cx="10" cy="10" r="1.800" /></g></svg></button>
            <button type="button" class="panel" aria-label="Side panel"><svg viewBox="0 0 22 18"><path d="M1 1h20v16H1zM7 1v16" fill="none" stroke="#777" stroke-width="1.800" /><path d="M11 5.500h6M13 9h4M11 12.500h6" stroke="#777" stroke-width="1.400" /></svg></button>
          </div>

          <svg class="board" viewBox="441 132 1072 706" preserveAspectRatio="xMinYMin meet" role="img" aria-label="CY-X682 board view">
            <path v-for="(d, i) in shapes" :key="'s' + i" :d="d" fill="#006b36" fill-rule="evenodd" stroke="#7fb79a" stroke-width="1" />
            <path v-for="(d, i) in traces" :key="'t' + i" :d="d" fill="none" stroke="#004000" stroke-width="3" />
            <path d="M994 388h35v27l-12 8v52h-23z" fill="none" stroke="#004000" stroke-width="5" />
            <circle v-for="(h, i) in holes" :key="'h' + i" :cx="h[0]" :cy="h[1]" :r="h[2] - 1" fill="none" stroke="#004000" />
            <circle v-for="(h, i) in vias" :key="'v' + i" :cx="h[0]" :cy="h[1]" :r="h[2]" fill="#ffd83d" />
            <circle v-for="(h, i) in tealVias" :key="'w' + i" :cx="h[0]" :cy="h[1]" :r="h[2]" fill="#008080" />
            <path d="M1071 522l22 22-22 22-22-22z" fill="#808080" />
            <g shape-rendering="crispEdges">
              <path :d="frames.join('')" fill="none" stroke="#e3e8e3" />
              <path :d="ink.g.join('')" fill="#808080" />
              <path :d="ink.y.join('')" fill="#ffd83d" />
              <path :d="ink.t.join('')" fill="#008080" />
              <path :d="crosses.g.join('')" fill="none" stroke="#808080" />
              <path :d="crosses.y.join('')" fill="none" stroke="#ffd83d" />
              <path :d="crosses.t.join('')" fill="none" stroke="#008080" />
            </g>
            <circle v-for="(h, i) in discs" :key="'d' + i" :cx="h[0]" :cy="h[1]" :r="h[2]" fill="#808080" />
            <g transform="rotate(-34 1030 569)">
              <path d="M1020.500 554.500h19v29h-19z" fill="none" stroke="#e3e8e3" />
              <path d="M1021 555h4v5h-4zM1035 555h4v5h-4zM1021 578h4v5h-4zM1035 578h4v5h-4z" fill="#808080" />
              <path d="M1021 562h5v2h-5zM1021 566h5v2h-5zM1021 570h5v2h-5zM1034 562h5v2h-5zM1034 566h5v2h-5zM1034 570h5v2h-5z" fill="#ffd83d" />
            </g>
            <text v-for="(o, i) in ones" :key="'o' + i" :x="o[0]" :y="o[1]" :font-size="o[2]" class="pin">1</text>
            <text v-for="(l, i) in labels" :key="'l' + i" :x="l.x" :y="l.y" :font-size="l.size" :transform="`rotate(${l.turn ?? 0} ${l.x} ${l.y})`" class="part">{{ l.text }}</text>
            <text v-for="(m, i) in marks" :key="'m' + i" :x="m[0]" :y="m[1] + 6" :transform="`rotate(-45 ${m[0]} ${m[1]})`" class="mark">XZZ@XZZHK</text>
          </svg>
        </div>
      </main>

      <div class="edge">
        <button type="button" aria-label="Open side panel">
          <svg viewBox="0 0 9 110"><path d="M9 0L0 14v82l9 14z" fill="#d6ebff" stroke="#9fd0ff" stroke-width=".6" /><path d="M6 52l-3 3 3 3" fill="none" stroke="#3d8bea" /></svg>
        </button>
      </div>
    </div>

    <footer>XZZ Schematics https://www.xzztools.com</footer>
  </div>
</template>

<style>
body {
  margin: 0;
}
</style>

<style scoped>
* {
  box-sizing: border-box;
}
.app {
  display: flex;
  flex-direction: column;
  height: 100vh;
  overflow: hidden;
  background: #fff;
  color: #000;
  font: 14px/24px "Noto Sans", "Open Sans", sans-serif;
}
button {
  display: flex;
  align-items: center;
  justify-content: center;
  margin: 0;
  padding: 0;
  border: 0;
  background: none;
  color: inherit;
  font: inherit;
  white-space: nowrap;
}
svg {
  display: block;
  overflow: visible;
}
.title-bar {
  display: flex;
  align-items: center;
  height: 40px;
  padding: 0 15px 0 11px;
  background: linear-gradient(100deg, #22a7ff 0, #3377ff 16%, #3277ff 50%, #2aa0ff 100%);
  color: #fff;
}
.logo {
  width: 28px;
  height: 30px;
}
h1 {
  margin: 0 0 0 11px;
  font-size: 14px;
  font-weight: 400;
}
.window-tools {
  display: flex;
  gap: 10px;
  margin-left: auto;
}
.window-tools svg {
  width: 20px;
  height: 20px;
}
.bag {
  padding-right: 10px;
  border-right: 1px solid #6db9ff;
}
.menu-bar {
  display: flex;
  gap: 18px;
  height: 32px;
  padding: 2px 18px 0;
  border-bottom: 1px solid #dcdcdc;
  background: #efefef;
}
.work {
  display: flex;
  flex: 1;
  min-height: 0;
}
.browser {
  display: flex;
  flex-direction: column;
  width: 431px;
  border-right: 1px solid #dcdcdc;
}
.finder {
  display: flex;
  flex: none;
  height: 40px;
  padding: 5px 5px 4px;
  border-bottom: 1px solid #dcdcdc;
}
.shrink {
  width: 49px;
  border: 1px solid #dcdcdc;
  border-radius: 3px;
}
.combo {
  display: flex;
  align-items: center;
  width: 302px;
  margin: 0 10px;
  padding: 0 9px 0 8px;
  border: 1px solid #dcdcdc;
  border-radius: 3px;
  background: #fff;
}
.combo input {
  flex: 1;
  min-width: 0;
  padding: 0;
  border: 0;
  outline: 0;
  background: none;
  font: inherit;
}
.combo input::placeholder {
  color: #bfc3cc;
}
.combo svg {
  width: 14px;
  height: 9px;
  margin-left: 6px;
}
.go {
  width: 49px;
  border-radius: 3px;
  background: #5093fb;
}
.go svg {
  width: 20px;
  height: 20px;
}
.panes {
  display: flex;
  flex: 1;
  min-height: 0;
}
.categories {
  display: flex;
  flex-direction: column;
  align-items: center;
  width: 74px;
  color: #666e80;
}
fieldset {
  width: 56px;
  min-width: 0;
  margin: 0 0 25px;
  padding: 0;
  border: 2px dashed #3399ff;
  border-radius: 8px;
}
.vip {
  height: 235px;
}
.custom {
  height: 235px;
  margin-bottom: 21px;
  border-color: #666e80;
}
legend {
  margin: 0 auto;
  padding: 0;
  line-height: 22px;
}
.vip legend,
.categories .on {
  color: #3399ff;
}
.categories button {
  flex-direction: column;
  width: 100%;
  height: 56px;
  margin-bottom: 14px;
}
.categories svg {
  width: 28px;
  height: 28px;
  margin-bottom: 2px;
}
fieldset button:first-of-type {
  margin-top: 9px;
}
.tree {
  display: flex;
  flex: 1;
  min-width: 0;
  background: linear-gradient(90deg, #d8e2f2 0, #e8edf5 10px, #f8f8f8 32px);
}
ul {
  flex: 1;
  min-width: 0;
  margin: 0;
  padding: 0 0 0 41px;
  overflow: hidden;
  list-style: none;
}
li {
  display: flex;
  align-items: center;
  gap: 6px;
  height: 24px;
  white-space: nowrap;
}
li svg {
  flex: none;
  width: 14px;
  height: 14px;
}
.pdf svg,
.pcb svg {
  height: 16px;
}
.pdf,
.pcb {
  gap: 4px;
  margin-left: 2px;
}
.d1 {
  padding-left: 20px;
}
.d2 {
  padding-left: 40px;
}
.d3 {
  padding-left: 60px;
}
.tree .on {
  color: #5c9bff;
}
.scroll {
  display: flex;
  flex-direction: column;
  width: 12px;
  background: #f0f0f0;
}
.scroll svg {
  width: 12px;
  height: 18px;
}
.gap-top {
  flex: 373;
}
.thumb {
  flex: 71;
  width: 10px;
  margin: 0 1px;
  border-radius: 5px;
  background: #555;
}
.gap-end {
  flex: 264;
}
.splitter {
  display: flex;
  flex-direction: column;
  width: 10px;
  padding-top: 335px;
  border-right: 1px solid #dcdcdc;
  background: #fafffa;
}
.splitter svg,
.edge svg {
  width: 9px;
  height: 110px;
}
.edge {
  width: 10px;
  margin-top: 34px;
  padding-top: 327px;
  border-left: 1px solid #dcdcdc;
  background: #fafafa;
}
main {
  display: flex;
  flex: 1;
  flex-direction: column;
  min-width: 0;
}
.tabs {
  display: flex;
  gap: 5px;
  flex: none;
  height: 34px;
  margin-right: -10px;
  padding: 5px 11px 4px 8px;
  border-bottom: 1px solid #dcdcdc;
  background: #fafafa;
}
.tab {
  height: 24px;
  border: 1px solid #808080;
  border-radius: 3px;
}
.home {
  gap: 3px;
  width: 139px;
  color: #808080;
}
.tab svg {
  width: 18px;
  height: 18px;
}
.current {
  width: 124px;
  border-color: #000;
  background: #fff;
  font-weight: 700;
}
.close-all {
  margin-left: auto;
}
.close-all svg {
  width: 18px;
  height: 18px;
}
.view {
  display: flex;
  flex: 1;
  flex-direction: column;
  min-height: 0;
}
.tools {
  display: flex;
  gap: 2px;
  align-items: center;
  flex: none;
  height: 26px;
  padding: 0 5px;
  background: #fafafa;
}
.tools > i {
  width: 1px;
  height: 20px;
  margin: 0 1px;
  background: #ccc;
}
.tools > button {
  width: 24px;
  height: 24px;
}
.tools > button svg {
  width: 20px;
  height: 20px;
}
.tools > .lit {
  background: #b5d0fa;
}
.tools .net {
  width: 231px;
  height: 20px;
  margin: 0;
  padding: 0 5px 0 2px;
  font-size: 12px;
}
.tools > .scheme {
  width: 110px;
  height: 22px;
  border: 1px solid #f00;
}
.tools > .panel {
  margin-left: auto;
}
.board {
  flex: 1;
  min-height: 0;
  width: 100%;
  overflow: hidden;
}
.part {
  fill: #e0e0e0;
  font-family: "Noto Sans", sans-serif;
  text-anchor: middle;
}
.pin {
  fill: #00009c;
  font-family: "Noto Sans", sans-serif;
  text-anchor: middle;
}
.mark {
  fill: rgb(120 110 70 / 45%);
  font-family: "Open Sans", sans-serif;
  font-size: 17px;
  text-anchor: middle;
}
footer {
  height: 20px;
  flex: none;
  background: #0590d9;
  color: #fff;
  font: bold 15px/20px "Liberation Mono", "DejaVu Sans Mono", monospace;
  text-align: center;
}
</style>
